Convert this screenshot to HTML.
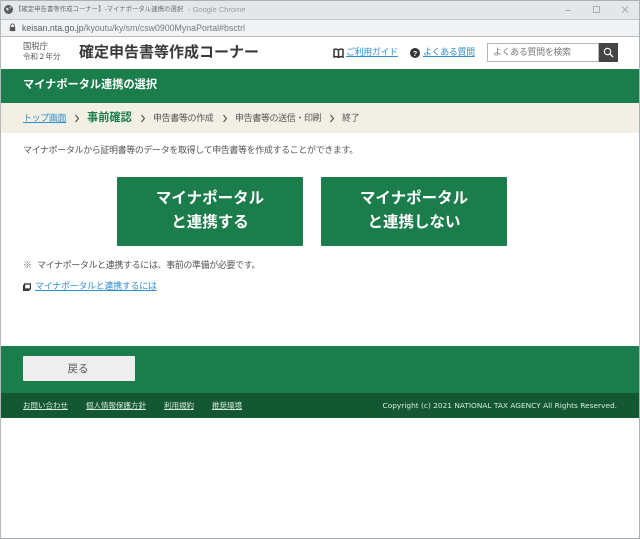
<!DOCTYPE html>
<html lang="ja"><head><meta charset="utf-8"><title>マイナポータル連携の選択</title>
<style>
html,body{margin:0;padding:0;background:#fff}
body{width:640px;height:539px;position:relative;overflow:hidden;font-family:"Liberation Sans","Noto Sans CJK JP",sans-serif;color:#444}
.a{position:absolute;white-space:nowrap}
.box{position:absolute}
.t{font-size:9px;letter-spacing:-.38px;line-height:13px;color:#555}
.l{color:#2f8fd0;text-decoration:underline;text-underline-offset:1px}
.btn{position:absolute;top:177px;width:186px;height:69px;background:#1b7d4b;color:#fff;font-weight:bold;font-size:15.500px;line-height:24px;text-align:center;padding-top:10px;box-sizing:border-box;border-radius:1px}
.f{position:absolute;top:400px;font-size:7.500px;line-height:12px;color:#d8e8de;text-decoration:underline;white-space:nowrap}
</style></head><body>
<div class="box" style="left:0;top:0;width:640px;height:20px;background:#e4e7ea"></div>
<div class="box" style="left:0;top:0;width:640px;height:1px;background:#a9b1b8"></div>
<div class="box" style="left:0;top:20px;width:640px;height:16px;background:#f0f2f4"></div>
<div class="box" style="left:0;top:19px;width:640px;height:1px;background:#c6c9cc"></div>
<div class="box" style="left:0;top:36px;width:640px;height:1px;background:#b9bdc1"></div>
<svg class="box" style="left:4px;top:5px" width="9" height="9" viewBox="0 0 11 11"><circle cx="5.500" cy="5.500" r="5.500" fill="#5a5d60"/><path d="M2 3l3 1 1 2-2 1zM7 1.500l2 2-2 1z" fill="#e4e7ea"/></svg>
<div class="a" style="left:15px;top:4px;font-size:6.400px;line-height:12px;color:#6a6e72">【確定申告書等作成コーナー】-マイナポータル連携の選択</div>
<div class="a" style="left:188px;top:4px;font-size:7.500px;line-height:12px;color:#999da1">- Google Chrome</div>
<svg class="box" style="left:8px;top:23px" width="9" height="9" viewBox="0 0 9 10"><path d="M2.500 4.500V3a2 2 0 0 1 4 0v1.500" fill="none" stroke="#555" stroke-width="1"/><rect x="1.500" y="4.500" width="6" height="4.500" fill="#555"/></svg>
<div class="a" style="left:22px;top:21px;font-size:8.800px;line-height:14px;color:#5a5e62">keisan.nta.go.jp<span style="color:#777b7f">/kyoutu/ky/sm/csw0900MynaPortal#bsctrl</span></div>
<svg class="box" style="left:560px;top:3px" width="76" height="14" viewBox="0 0 76 14"><path d="M5 7.500h6" stroke="#a8acb0" fill="none"/><rect x="33.500" y="3.500" width="6" height="6" fill="none" stroke="#a8acb0" stroke-width="1"/><path d="M62 3.500l6 6M68 3.500l-6 6" stroke="#a8acb0" fill="none"/></svg>

<div class="a" style="left:23px;top:40px;font-size:8.300px;line-height:12px;color:#555">国税庁</div>
<div class="a" style="left:23px;top:51px;font-size:7.500px;line-height:12px;color:#555">令和２年分</div>
<div class="a" style="left:79px;top:43px;font-size:15px;line-height:20px;font-weight:bold;color:#3a3a3a">確定申告書等作成コーナー</div>
<svg class="box" style="left:333px;top:48px" width="11" height="10" viewBox="0 0 11 10"><path d="M5.500 2C4 1 2.500 1 1 1.500V9c1.500-.5 3-.5 4.500.500C7 8.500 8.500 8.500 10 9V1.500C8.500 1 7 1 5.500 2zM5.500 2v7.500" fill="none" stroke="#333" stroke-width="1.500"/></svg>
<div class="a l t" style="left:346px;top:46px;color:#2f8fd0">ご利用ガイド</div>
<svg class="box" style="left:410px;top:48px" width="10" height="10" viewBox="0 0 10 10"><circle cx="5" cy="5" r="5" fill="#333"/><text x="5" y="8" font-size="7.500" font-weight="bold" text-anchor="middle" fill="#fff" font-family="Liberation Sans">?</text></svg>
<div class="a l t" style="left:423px;top:46px;color:#2f8fd0">よくある質問</div>
<div class="box" style="left:487px;top:43px;width:112px;height:19px;border:1px solid #b5b5b5;box-sizing:border-box;background:#fff"></div>
<div class="a t" style="left:493px;top:46px;color:#777">よくある質問を検索</div>
<div class="box" style="left:599px;top:43px;width:19px;height:19px;background:#444"></div>
<svg class="box" style="left:603px;top:47px" width="11" height="11" viewBox="0 0 11 11"><circle cx="4.500" cy="4.500" r="3.200" fill="none" stroke="#fff" stroke-width="1.100"/><path d="M7 7l3 3" stroke="#fff" stroke-width="1.300"/></svg>

<div class="box" style="left:0;top:69px;width:640px;height:34px;background:#1b7d4b"></div>
<div class="a" style="left:23px;top:77px;font-size:11.200px;line-height:16px;font-weight:bold;color:#fff">マイナポータル連携の選択</div>
<div class="box" style="left:0;top:103px;width:640px;height:30px;background:#f2efe4"></div>
<div class="a l t" style="left:23px;top:112px;color:#2f8fd0">トップ画面</div>
<svg class="box" style="left:74px;top:114px" width="6" height="9" viewBox="0 0 6 9"><path d="M1.500 1l3 3.500-3 3.500" fill="none" stroke="#444" stroke-width="1"/></svg>
<div class="a" style="left:87px;top:110px;font-size:11.200px;line-height:16px;font-weight:bold;color:#1b7d4b">事前確認</div>
<svg class="box" style="left:140px;top:114px" width="6" height="9" viewBox="0 0 6 9"><path d="M1.500 1l3 3.500-3 3.500" fill="none" stroke="#444" stroke-width="1"/></svg>
<div class="a t" style="left:153px;top:112px">申告書等の作成</div>
<svg class="box" style="left:222px;top:114px" width="6" height="9" viewBox="0 0 6 9"><path d="M1.500 1l3 3.500-3 3.500" fill="none" stroke="#444" stroke-width="1"/></svg>
<div class="a t" style="left:235px;top:112px">申告書等の送信・印刷</div>
<svg class="box" style="left:329px;top:114px" width="6" height="9" viewBox="0 0 6 9"><path d="M1.500 1l3 3.500-3 3.500" fill="none" stroke="#444" stroke-width="1"/></svg>
<div class="a t" style="left:342px;top:112px">終了</div>

<div class="a t" style="left:23px;top:144px">マイナポータルから証明書等のデータを取得して申告書等を作成することができます。</div>
<div class="btn" style="left:117px">マイナポータル<br>と連携する</div>
<div class="btn" style="left:321px">マイナポータル<br>と連携しない</div>
<div class="a t" style="left:23px;top:259px;color:#777">※</div>
<div class="a t" style="left:37px;top:259px">マイナポータルと連携するには、事前の準備が必要です。</div>
<svg class="box" style="left:23px;top:283px" width="8" height="8" viewBox="0 0 8 8"><rect x="1.500" y="1" width="6" height="5" fill="#fff" stroke="#333" stroke-width="1.300"/><path d="M.7 2V7.300H6.500" fill="none" stroke="#333" stroke-width="1.400"/></svg>
<div class="a l t" style="left:35px;top:280px;color:#2f8fd0;letter-spacing:-.3px">マイナポータルと連携するには</div>

<div class="box" style="left:0;top:346px;width:640px;height:47px;background:#1b7d4b"></div>
<div class="box" style="left:23px;top:356px;width:112px;height:25px;background:#eeeeee;border-radius:1px"></div>
<div class="a" style="left:23px;width:110px;text-align:center;top:362px;font-size:10.500px;line-height:15px;color:#555">戻る</div>
<div class="box" style="left:0;top:393px;width:640px;height:25px;background:#135833"></div>
<div class="f" style="left:23px">お問い合わせ</div>
<div class="f" style="left:86px">個人情報保護方針</div>
<div class="f" style="left:164px">利用規約</div>
<div class="f" style="left:212px">推奨環境</div>
<div class="a" style="right:23px;top:400px;font-size:7.400px;line-height:12px;color:#d8e8de;font-family:'DejaVu Sans','Liberation Sans',sans-serif">Copyright (c) 2021 NATIONAL TAX AGENCY All Rights Reserved.</div>

<div class="box" style="left:0;top:0;width:1px;height:539px;background:#b5b8bb"></div>
<div class="box" style="right:0;top:0;width:1px;height:539px;background:#a9b1b8"></div>
<div class="box" style="left:0;top:538px;width:640px;height:1px;background:#a9adb0"></div>
</body></html>
